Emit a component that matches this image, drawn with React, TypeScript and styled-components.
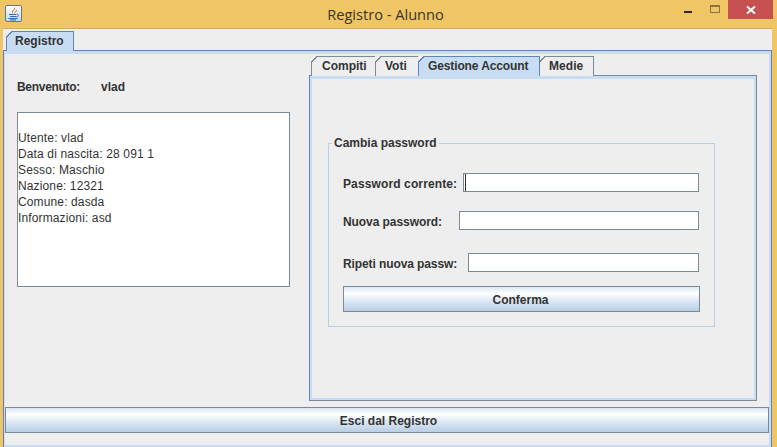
import React from 'react';
import styled, { createGlobalStyle } from 'styled-components';

const GlobalStyle = createGlobalStyle`
  html, body {
    margin: 0;
    padding: 0;
    background: #f0c566;
  }
  * {
    box-sizing: border-box;
  }
`;

const Frame = styled.div`
  width: 777px;
  height: 447px;
  overflow: hidden;
  display: flex;
  flex-direction: column;
  background: #f0c566;
  font-family: "Liberation Sans", Arial, sans-serif;
  font-size: 12px;
  color: #333333;
`;

const TitleBar = styled.div`
  height: 28px;
  flex: none;
  display: flex;
  align-items: flex-start;
  padding-left: 5px;
`;

const AppIcon = styled.svg`
  width: 17px;
  height: 17px;
  margin-top: 5px;
  flex: none;
`;

const WindowTitle = styled.div`
  flex: 1;
  padding-left: 65px;
  text-align: center;
  font-family: "Open Sans", "Noto Sans", sans-serif;
  font-size: 14.6px;
  line-height: 28px;
  color: #3a3528;
`;

const WindowButtons = styled.div`
  display: flex;
  align-items: flex-start;
  margin-right: 4px;
`;

const MinimizeButton = styled.div`
  width: 8px;
  height: 2px;
  margin: 11px 18px 0 0;
  background: #2b2a28;
`;

const MaximizeButton = styled.div`
  width: 10px;
  height: 8px;
  margin: 5px 8px 0 0;
  border: 1px solid #8a7444;
  border-top-width: 2px;
`;

const CloseButton = styled.div`
  width: 45px;
  height: 19px;
  background: #c75050;
  color: #ffffff;
  display: flex;
  align-items: center;
  justify-content: center;
`;

const Client = styled.div`
  flex: 1;
  min-height: 0;
  margin: 0 5px 0 3px;
  display: flex;
  flex-direction: column;
  background: #eeeeee;
  border-top: 1px solid #d4a95b;
`;

const TabStrip = styled.div<{ $top: number; $left: number }>`
  display: flex;
  flex: none;
  position: relative;
  z-index: 1;
  padding: ${(p) => p.$top}px 0 0 ${(p) => p.$left}px;
  margin-bottom: -1px;
`;

const Tab = styled.div<{ $width: number; $selected?: boolean; $pad: number; $spacing?: number }>`
  position: relative;
  width: ${(p) => p.$width}px;
  height: 20px;
  margin-right: -1px;
  padding-left: ${(p) => p.$pad}px;
  font-weight: bold;
  line-height: 19px;
  letter-spacing: ${(p) => p.$spacing ?? 0}px;
  background: ${(p) => (p.$selected ? '#c8ddf2' : '#eeeeee')};
  border: 1px solid ${(p) => (p.$selected ? '#6382bf' : '#7a8a99')};
  border-bottom: none;
  z-index: ${(p) => (p.$selected ? 2 : 1)};

  &::before {
    content: '';
    position: absolute;
    top: -1px;
    left: -1px;
    width: 6px;
    height: 6px;
    background: linear-gradient(
      135deg,
      #eeeeee 46%,
      ${(p) => (p.$selected ? '#6382bf' : '#7a8a99')} 46%,
      ${(p) => (p.$selected ? '#6382bf' : '#7a8a99')} 62%,
      transparent 62%
    );
  }
`;

const MainPanel = styled.div`
  flex: 1;
  min-height: 0;
  display: flex;
  flex-direction: column;
  border: 1px solid #6382bf;
  border-bottom: none;
  box-shadow: inset 1px 3px 0 #c8ddf2, inset -2px -2px 0 #c8ddf2;
`;

const Columns = styled.div`
  display: flex;
  flex: none;
  align-items: flex-start;
`;

const LeftColumn = styled.div`
  width: 305px;
  flex: none;
  padding: 28px 0 0 13px;
`;

const WelcomeRow = styled.div`
  display: flex;
  height: 16px;
  margin-bottom: 17px;
  line-height: 16px;
  font-weight: bold;
`;

const WelcomeLabel = styled.div`
  width: 84px;
  letter-spacing: -0.3px;
`;

const InfoBox = styled.div`
  width: 273px;
  height: 175px;
  padding: 17px 0 0 0;
  background: #ffffff;
  border: 1px solid #7a8a99;
  line-height: 16px;
  letter-spacing: 0.13px;
`;

const RightColumn = styled.div`
  width: 448px;
  flex: none;
  padding-top: 5px;
`;

const InnerPanel = styled.div`
  height: 326px;
  padding: 59px 41px 0 18px;
  border: 1px solid #7a8a99;
  border-left-color: #6382bf;
  box-shadow: inset 2px 3px 0 #c8ddf2, inset -2px -2px 0 #c8ddf2;
`;

const Group = styled.fieldset`
  margin: 0;
  padding: 0 14px 14px;
  border: 1px solid #b8cfe5;
  min-width: 0;
`;

const GroupTitle = styled.legend`
  margin-left: -11px;
  padding: 0 2px;
  font-weight: bold;
  line-height: 16px;
  color: #333333;
`;

const FormRow = styled.div<{ $top: number }>`
  display: flex;
  align-items: center;
  height: 19px;
  margin: ${(p) => p.$top}px 1px 0 0;
`;

const FormLabel = styled.label<{ $width: number; $spacing: number }>`
  width: ${(p) => p.$width}px;
  flex: none;
  padding-top: 2px;
  font-weight: bold;
  white-space: nowrap;
  letter-spacing: ${(p) => p.$spacing}px;
`;

const TextField = styled.input<{ $caret?: boolean }>`
  flex: 1;
  min-width: 0;
  height: 19px;
  margin: 0;
  padding: 0;
  background: #ffffff;
  border: 1px solid #7a8a99;
  outline: none;
  box-shadow: ${(p) => (p.$caret ? 'inset 1px 0 0 #ffffff, inset 2px 0 0 #333333' : 'none')};
`;

const GradientButton = styled.button<{ $top?: number; $padLeft?: number; $padRight?: number }>`
  display: block;
  width: 100%;
  height: 26px;
  margin: ${(p) => p.$top ?? 0}px 0 0 0;
  padding: 1px ${(p) => p.$padRight ?? 0}px 0 ${(p) => p.$padLeft ?? 0}px;
  border: 1px solid #7a8a99;
  font-family: inherit;
  font-size: 12px;
  font-weight: bold;
  color: #333333;
  background: linear-gradient(#dde8f3 0%, #ffffff 28%, #e4edf6 50%, #b8cfe5 100%);
`;

const ExitRow = styled.div`
  margin: 6px 2px 0 1px;
`;

const JavaIcon = () => (
  <AppIcon viewBox="0 0 17 17">
    <defs>
      <linearGradient id="iconBg" x1="0" y1="0" x2="0" y2="1">
        <stop offset="0" stopColor="#ffffff" />
        <stop offset="1" stopColor="#c4d5e8" />
      </linearGradient>
    </defs>
    <rect x="0.5" y="0.5" width="16" height="16" rx="1.5" fill="url(#iconBg)" stroke="#64788c" />
    <path d="M10 2 C11 4.5 7 5.5 8 8.5 C5.5 6.5 9 4.5 10 2 Z M12 4.5 C12.5 6.5 9.8 7 10 8.5 C8.8 7 11.3 6 12 4.5 Z" fill="#d9601a" />
    <path d="M4 9.5 H11 M5 11.5 H11 M3.5 13.5 H12.5 M5 15 H11" stroke="#2b6ba6" strokeWidth="1.1" fill="none" />
    <path d="M11.5 9.3 C14.2 8.8 14.2 11.8 11 12" stroke="#2b6ba6" strokeWidth="0.9" fill="none" />
  </AppIcon>
);

const CloseIcon = () => (
  <svg width="10" height="10" viewBox="0 0 10 10">
    <path d="M1 1.5 L9 8.5 M9 1.5 L1 8.5" stroke="#ffffff" strokeWidth="2" fill="none" />
  </svg>
);

const innerTabs = [
  { label: 'Compiti', width: 65, pad: 10, spacing: 0 },
  { label: 'Voti', width: 44, pad: 9, spacing: 0 },
  { label: 'Gestione Account', width: 122, pad: 9, spacing: -0.12, selected: true },
  { label: 'Medie', width: 55, pad: 9, spacing: 0.05 },
];

const infoLines = [
  'Utente: vlad',
  'Data di nascita: 28 091 1',
  'Sesso: Maschio',
  'Nazione: 12321',
  'Comune: dasda',
  'Informazioni: asd',
];

export default function App() {
  return (
    <Frame>
      <GlobalStyle />
      <TitleBar>
        <JavaIcon />
        <WindowTitle>Registro - Alunno</WindowTitle>
        <WindowButtons>
          <MinimizeButton />
          <MaximizeButton />
          <CloseButton>
            <CloseIcon />
          </CloseButton>
        </WindowButtons>
      </TitleBar>
      <Client>
        <TabStrip $top={2} $left={3}>
          <Tab $width={68} $pad={8} $selected>
            Registro
          </Tab>
        </TabStrip>
        <MainPanel>
          <Columns>
            <LeftColumn>
              <WelcomeRow>
                <WelcomeLabel>Benvenuto:</WelcomeLabel>
                <div>vlad</div>
              </WelcomeRow>
              <InfoBox>
                {infoLines.map((line) => (
                  <div key={line}>{line}</div>
                ))}
              </InfoBox>
            </LeftColumn>
            <RightColumn>
              <TabStrip $top={0} $left={2}>
                {innerTabs.map((t) => (
                  <Tab key={t.label} $width={t.width} $pad={t.pad} $spacing={t.spacing} $selected={t.selected}>
                    {t.label}
                  </Tab>
                ))}
              </TabStrip>
              <InnerPanel>
                <Group>
                  <GroupTitle>Cambia password</GroupTitle>
                  <FormRow $top={22}>
                    <FormLabel $width={120} $spacing={0.12}>Password corrente:</FormLabel>
                    <TextField $caret />
                  </FormRow>
                  <FormRow $top={19}>
                    <FormLabel $width={116} $spacing={-0.07}>Nuova password:</FormLabel>
                    <TextField />
                  </FormRow>
                  <FormRow $top={23}>
                    <FormLabel $width={125} $spacing={-0.1}>Ripeti nuova passw:</FormLabel>
                    <TextField />
                  </FormRow>
                  <GradientButton $top={14} $padRight={2}>Conferma</GradientButton>
                </Group>
              </InnerPanel>
            </RightColumn>
          </Columns>
          <ExitRow>
            <GradientButton $padLeft={3}>Esci dal Registro</GradientButton>
          </ExitRow>
        </MainPanel>
      </Client>
    </Frame>
  );
}
